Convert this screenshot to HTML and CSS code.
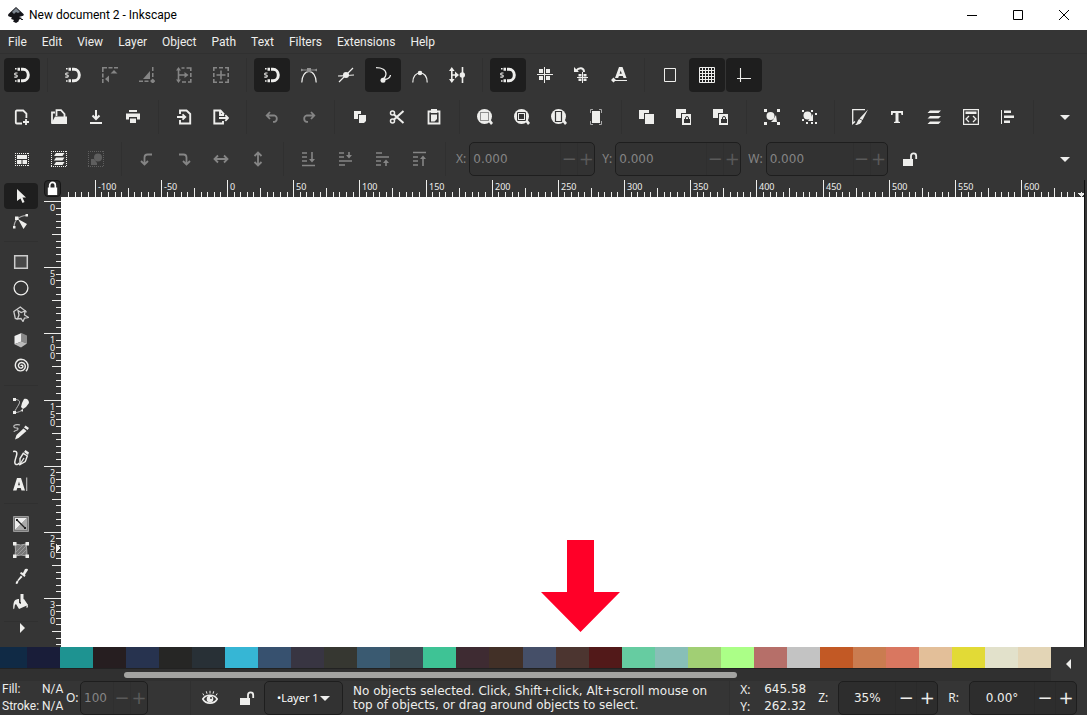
FILE: index.html
```html
<!DOCTYPE html>
<html lang="en">
<head>
<meta charset="utf-8">
<title>New document 2 - Inkscape</title>
<link rel="stylesheet" href="styles.css">
</head>
<body>
<svg class="sprite" aria-hidden="true">
  <symbol id="snap" viewBox="0 0 16 16"><path d="M7 2.200h2a5.300 5.800 0 0 1 0 11.600H7" fill="none" stroke="currentColor" stroke-width="3"/><path d="M3.500.700h2.500v3H3.500zM3.500 12.300h2.500v3H3.500zM1 .9h1.600v1.600H1zM1 13.200h1.600v1.600H1z"/><path d="M3.500 6H1.600c-1.200 0-1.200 2 0 2h.6c1.400 0 1.400 2.200 0 2.200H.3" fill="none" stroke="currentColor" stroke-width="1.200"/></symbol>
  <symbol id="bbox" viewBox="0 0 16 16"><path d="M0 0h5v1.600H1.600V5H0zM6.500 0h4v1.600h-4zM12 0h4v1.600h-4zM0 6.500h1.600v4H0zM0 12h1.600v4H0zM8.500 6.500L12 3l3.500 3.500zM3 12l4-3.500v7z"/></symbol>
  <symbol id="bboxedge" viewBox="0 0 16 16"><path d="M4 12l7-8v8zM0 13.500h4V15H0zM5.500 13.500h4V15h-4zM13 0h1.500v4H13zM13 6h1.500v4H13zM13.700 11.500l2.600 2.600-2.600 2.600-2.600-2.600z"/></symbol>
  <symbol id="bboxmid" viewBox="0 0 16 16"><path d="M5.500 1h3M10.500 1h4.300v3M14.800 6v4M14.800 12v3H12M10 15H6" fill="none" stroke="currentColor" stroke-width="1.600"/><path d="M2.500 2v12M3 8h7" fill="none" stroke="currentColor" stroke-width="1.600"/><path d="M2.500 0l2.500 3.500H0zM2.500 16l2.500-3.500H0zM8.500 5l4 3-4 3z"/></symbol>
  <symbol id="bboxcenter" viewBox="0 0 16 16"><path d="M.8 4V.8H4M6 .8h4M12 .8h3.200V4M15.200 6v4M15.200 12v3.200H12M10 15.200H6M4 15.200H.8V12M.8 10V6M8 3.500v9M3.500 8h9" fill="none" stroke="currentColor" stroke-width="1.600"/></symbol>
  <symbol id="nodes" viewBox="0 0 16 16"><path d="M.8 15.500C.8 9 4 4.500 8 4.500s7.200 4.500 7.200 11" fill="none" stroke="currentColor" stroke-width="1.200"/><path d="M1 3h14" stroke="#929292" fill="none"/><path d="M6 1h4v4H6zM0 1.500l2.500 1.500-2.500 1.500zM16 1.500L13.500 3l2.500 1.500z" fill="#929292"/></symbol>
  <symbol id="intersect" viewBox="0 0 16 16"><path d="M0 9c6 0 10-1 16-1M1 15L15 1" fill="none" stroke="currentColor" stroke-width="1.200"/><circle cx="8" cy="8" r="3"/></symbol>
  <symbol id="snappath" viewBox="0 0 16 16"><path d="M1 .7c6 0 10 2.300 10 6.300 0 3-2 4-3 5 4 1 7-1 7.500-4" fill="none" stroke="currentColor" stroke-width="1.300"/><circle cx="8" cy="13.300" r="2.500"/></symbol>
  <symbol id="smooth" viewBox="0 0 16 16"><path d="M.8 15.500C.8 9 4 6 8 6s7.200 3 7.200 9.500" fill="none" stroke="currentColor" stroke-width="1.200"/><circle cx="8" cy="6" r="2.300"/></symbol>
  <symbol id="midline" viewBox="0 0 16 16"><path d="M2.800 2v12M3 8h6M13.500 0v16" fill="none" stroke="currentColor" stroke-width="1.600"/><path d="M2.800 0l2.800 4H0zM2.800 16l2.800-4H0zM6 4.500L10 8l-4 3.500z"/><circle cx="13.300" cy="8" r="2.700"/></symbol>
  <symbol id="centers" viewBox="0 0 16 16"><path d="M2 2h4v4H2zM9 2h4v4H9zM2 9h4v4H2zM9 9h4v4H9z"/><path d="M7.500 0v16M0 7.500h16" stroke="currentColor"/></symbol>
  <symbol id="rotcenter" viewBox="0 0 16 16"><path d="M2 4c3-4 8-3.500 8 1" fill="none" stroke="currentColor" stroke-width="2"/><path d="M0 0l5 5H0zM4.500 7h3v2.500h-3zM9.500 7h3v2.500h-3zM4.500 11.500h3V14h-3zM9.500 11.500h3V14h-3z"/><path d="M8.500 5v11M3 10.500h11" stroke="currentColor" fill="none"/></symbol>
  <symbol id="baseline" viewBox="0 0 16 16"><path fill-rule="evenodd" d="M4 11L8 0h3.500l4 11h-3l-.7-2H7.900l-.7 2zM8.600 6.800h2.200L9.700 3.500zM2.500 10.500L5 13l-2.500 2.500L0 13z"/><path d="M3 13.500h13" stroke="currentColor"/></symbol>
  <symbol id="page" viewBox="0 0 16 16"><path d="M2.500 1.500h11v13h-11z" fill="none" stroke="currentColor"/></symbol>
  <symbol id="grid" viewBox="0 0 16 16"><path d="M.5.500h15v15H.5zM3.500 0v16M6.500 0v16M9.500 0v16M12.500 0v16M0 3.500h16M0 6.500h16M0 9.500h16M0 12.500h16" fill="none" stroke="currentColor"/></symbol>
  <symbol id="guide" viewBox="0 0 16 16"><path d="M4.500 1v14M1 11.500h14" fill="none" stroke="currentColor" stroke-width="1.100"/></symbol>
  <symbol id="new" viewBox="0 0 16 16"><path d="M8 14.500H2.800a1 1 0 0 1-1-1V2.500a1 1 0 0 1 1-1h6.400l3.200 3.200V9" fill="none" stroke="currentColor" stroke-width="1.800"/><path d="M12 10v6M9 13h6" fill="none" stroke="currentColor" stroke-width="1.800"/></symbol>
  <symbol id="open" viewBox="0 0 16 16"><path d="M5.500 7V1.200h4.500L13.500 5v3M1 14V3.500h3" fill="none" stroke="currentColor" stroke-width="1.800"/><path d="M4 7.500h12v7.500H0z"/></symbol>
  <symbol id="save" viewBox="0 0 16 16"><path d="M8 1v9M4.500 6.500L8 10l3.500-3.500M2 14h12" fill="none" stroke="currentColor" stroke-width="2"/></symbol>
  <symbol id="print" viewBox="0 0 16 16"><path d="M4 1h8v2H4zM1 4.500h14v6h-3V8H4v2.500H1zM5 9.500h6V14H5z"/></symbol>
  <symbol id="import" viewBox="0 0 16 16"><path d="M4 5V1.500h6.500L14.200 5v9.500H4V11" fill="none" stroke="currentColor" stroke-width="1.900"/><path d="M1 8h8M6.500 5.300L9.300 8 6.500 10.700" fill="none" stroke="currentColor" stroke-width="1.800"/></symbol>
  <symbol id="export" viewBox="0 0 16 16"><path d="M11 5.500L7.500 1.500H1.300v13H10V12M7 2v4h4" fill="none" stroke="currentColor" stroke-width="1.900"/><path d="M6 9h9M12.300 6.200L15 9l-2.700 2.800" fill="none" stroke="currentColor" stroke-width="1.800"/></symbol>
  <symbol id="undo" viewBox="0 0 16 16"><path d="M3 6.500h7.500a3.300 3.300 0 0 1 0 6.300H9M6 3L2.700 6.500 6 10" fill="none" stroke="currentColor" stroke-width="1.800"/></symbol>
  <symbol id="redo" viewBox="0 0 16 16"><path d="M13 6.500H5.500a3.300 3.300 0 0 0 0 6.300H7M10 3l3.300 3.500L10 10" fill="none" stroke="currentColor" stroke-width="1.800"/></symbol>
  <symbol id="copy" viewBox="0 0 16 16"><path d="M2 2h7v3H6v5H2z"/><path d="M7 6h7v6l-2 2H7z"/></symbol>
  <symbol id="cut" viewBox="0 0 16 16"><path d="M5 5.500L14.500 14M5 10.500L14.500 2" stroke="currentColor" stroke-width="2" fill="none"/><circle cx="3.500" cy="4" r="2" fill="none" stroke="currentColor" stroke-width="1.500"/><circle cx="3.500" cy="12" r="2" fill="none" stroke="currentColor" stroke-width="1.500"/></symbol>
  <symbol id="paste" viewBox="0 0 16 16"><path d="M2.500 2.500h11v12h-11z" fill="none" stroke="currentColor" stroke-width="1.800"/><path d="M5 0h6v4H5zM5 5.500h6V10l-2.500 2.500H5z"/></symbol>
  <symbol id="zoomsel" viewBox="0 0 16 16"><circle cx="7.500" cy="7.500" r="7.500"/><path d="M11 12l2-2 3 4-2 2z"/><path d="M3.500 3.500h8v8h-8z" fill="none" stroke="#333" stroke-dasharray="1 1"/></symbol>
  <symbol id="zoomdraw" viewBox="0 0 16 16"><circle cx="7.500" cy="7.500" r="7.500"/><path d="M11 12l2-2 3 4-2 2z"/><path d="M3.500 3.500h8v8h-8z" fill="none" stroke="#333"/><path d="M5 5h5v5H5z" fill="#333"/></symbol>
  <symbol id="zoompage" viewBox="0 0 16 16"><circle cx="7.500" cy="7.500" r="7.500"/><path d="M11 12l2-2 3 4-2 2z"/><path d="M4.500 2.500h6v10h-6z" fill="none" stroke="#333" stroke-width="1.200"/></symbol>
  <symbol id="zoomfit" viewBox="0 0 16 16"><path d="M4 2h8v12H4z"/><path d="M2.500 4V.5H5M11 .5h2.500V4M13.500 12v3.500H11M5 15.500H2.500V12" fill="none" stroke="#aaa"/></symbol>
  <symbol id="dup" viewBox="0 0 16 16"><path d="M0 1h10v3H5v6H0z"/><path d="M6 5h9v10H6z"/></symbol>
  <symbol id="clone" viewBox="0 0 16 16"><path d="M0 0h10v4H5v5H0z"/><path d="M6 5h9v11H6z"/><path d="M8 10h6v4H8z" fill="#333"/><path d="M9.500 10V9a1.500 1.500 0 0 1 3 0v1" fill="none" stroke="#333"/></symbol>
  <symbol id="group" viewBox="0 0 16 16"><path d="M0 0h3v3H0zM13 0h3v3h-3zM0 13h3v3H0zM13 13h3v3h-3zM9 11l3-5 1 7H7z"/><circle cx="6.500" cy="7" r="4"/></symbol>
  <symbol id="ungroup" viewBox="0 0 16 16"><path d="M1 1h2v2H1zM10 1h2v2h-2zM1 10h2v2H1zM14 4h2v2h-2zM5 13h2v2H5zM14 13h2v2h-2zM10 13h2v2h-2zM12 5v7H7z"/><circle cx="6.500" cy="6.500" r="4"/></symbol>
  <symbol id="fillstroke" viewBox="0 0 16 16"><path d="M13 .7H.7V14.500L3 12.500" fill="none" stroke="currentColor" stroke-width="1.300"/><path d="M16 .5L10.500 11l-3-1.500zM7 10l3 1.500c-.5 3-3.500 4.500-7 4.500 2-1 2-4 4-6z"/></symbol>
  <symbol id="text" viewBox="0 0 16 16"><path d="M2 2h12v4h-1.500L12 4H9.500v8.500L11 13v1H5v-1l1.500-.5V4H4l-.5 2H2z"/></symbol>
  <symbol id="layers" viewBox="0 0 16 16"><path d="M4 1.500h11L12.500 4h-11zM4 7h11l-2.500 2.500h-11zM4 12.500h11L12.500 15h-11z"/></symbol>
  <symbol id="xml" viewBox="0 0 16 16"><path d="M.6.600h14.800v14.800H.6z" fill="none" stroke="currentColor" stroke-width="1.200"/><path d="M2.500 2.500h11V5h-11z"/><path d="M6 7L3 10l3 3M10 7l3 3-3 3" fill="none" stroke="currentColor" stroke-width="1.300"/></symbol>
  <symbol id="align" viewBox="0 0 16 16"><path d="M1 1h1v14H1zM4 1.500h7V4H4zM4 6.500h10V9H4zM4 11.500h6V14H4z"/></symbol>
  <symbol id="selall" viewBox="0 0 16 16"><path d="M1 2.500h14M1 14.500h14M1.500 2v13M14.500 2v13" fill="none" stroke="currentColor" stroke-dasharray="1 1"/><path d="M3 4h10v4H3zM3 9h4.500v4H3zM8.500 9h4.500v4H8.500z"/></symbol>
  <symbol id="sellayers" viewBox="0 0 16 16"><path d="M0 .5h16M0 15.500h16M.5 0v16M15.500 0v16" fill="none" stroke="currentColor" stroke-dasharray="1 1"/><path d="M5 2h8.500l-2 3H3zM5 6.500h8.500l-2 3H3zM5 11h8.500l-2 3H3z"/></symbol>
  <symbol id="desel" viewBox="0 0 16 16"><path d="M0 .5h16M0 15.500h16M.5 0v16M15.500 0v16" fill="none" stroke="currentColor" stroke-dasharray="1 1"/><circle cx="10" cy="6.500" r="4"/><path d="M3 8h3l3 4v2H3z"/></symbol>
  <symbol id="rotl" viewBox="0 0 16 16"><path d="M13 3.500H8.500a3 3 0 0 0-3 3V13M2 10l3.500 3.500L9 10" fill="none" stroke="currentColor" stroke-width="1.800"/></symbol>
  <symbol id="rotr" viewBox="0 0 16 16"><path d="M3 3.500h4.500a3 3 0 0 1 3 3V13M7 10l3.500 3.500L14 10" fill="none" stroke="currentColor" stroke-width="1.800"/></symbol>
  <symbol id="fliph" viewBox="0 0 16 16"><path d="M2 8h12M5 4.500L1.500 8 5 11.500M11 4.500L14.500 8 11 11.500" fill="none" stroke="currentColor" stroke-width="1.800"/></symbol>
  <symbol id="flipv" viewBox="0 0 16 16"><path d="M8 2v12M4.500 5L8 1.500 11.500 5M4.500 11L8 14.500 11.500 11" fill="none" stroke="currentColor" stroke-width="1.800"/></symbol>
  <symbol id="tobottom" viewBox="0 0 16 16"><path d="M1 2h5M1 6h5M1 10h5M1 14.500h13" stroke="currentColor" stroke-width="1.600" fill="none"/><path d="M10.200 1h1.600v7H14l-3 3.500L8 8h2.200z"/></symbol>
  <symbol id="lower" viewBox="0 0 16 16"><path d="M1 2h5M1 6h5M1 10h13M1 14h6" stroke="currentColor" stroke-width="1.600" fill="none"/><path d="M10.200 1h1.600v3H14l-3 3.500L8 4h2.200z"/></symbol>
  <symbol id="raise" viewBox="0 0 16 16"><path d="M1 2h6M1 6h13M1 10h5M1 14h5" stroke="currentColor" stroke-width="1.600" fill="none"/><path d="M10.200 15h1.600v-3H14l-3-3.500L8 12h2.200z"/></symbol>
  <symbol id="totop" viewBox="0 0 16 16"><path d="M1 1.500h13M1 6h5M1 10h5M1 14h5" stroke="currentColor" stroke-width="1.600" fill="none"/><path d="M10.200 15h1.600V8H14l-3-3.500L8 8h2.200z"/></symbol>
  <symbol id="unlock" viewBox="0 0 16 16"><path d="M1 8h10v7H1z"/><path d="M9 8V5a2.600 2.600 0 0 1 5.200 0v3" fill="none" stroke="currentColor" stroke-width="1.800"/></symbol>
  <symbol id="lock" viewBox="0 0 16 16"><path d="M3 7h10v8H3z"/><path d="M5 8V4.500a3 3 0 0 1 6 0V8" fill="none" stroke="currentColor" stroke-width="1.800"/></symbol>
  <symbol id="down" viewBox="0 0 16 16"><path d="M3 6h10l-5 5z"/></symbol>
  <symbol id="right" viewBox="0 0 16 16"><path d="M6 3l5 5-5 5z"/></symbol>
  <symbol id="left" viewBox="0 0 16 16"><path d="M10 3L5 8l5 5z"/></symbol>
  <symbol id="t-select" viewBox="0 0 16 16"><path d="M4 1l9 8.500H9.500l2 4.500-2 1-2-4.500L4 13z"/></symbol>
  <symbol id="t-node" viewBox="0 0 16 16"><path d="M1 14C1 6 5 2 14 1.500" fill="none" stroke="#aaa" stroke-width="1.200"/><path d="M0 12h2.500v2.500H0zM12.500 0H15v2.500h-2.500zM2 2.500h3.500V6H2zM5 5l9 5-3.500 5z"/></symbol>
  <symbol id="t-rect" viewBox="0 0 16 16"><path d="M1.700 1.700h12.600v12.600H1.700z" fill="#484848" stroke="#ccc" stroke-width="1.500"/></symbol>
  <symbol id="t-circle" viewBox="0 0 16 16"><circle cx="8" cy="8" r="6.900" fill="none" stroke="currentColor" stroke-width="1.300"/></symbol>
  <symbol id="t-star" viewBox="0 0 16 16"><path d="M4.500 13L2.300 12.500.800 5.500 7.300 1l5.700 4.500-.2 1" fill="none" stroke="#ccc" stroke-width="1.300"/><path d="M5 4.500l3.200 2L12 5l-.5 4 4 2.500-4 .5-1.500 3.500-2-3-3.500.5 1.500-4z" fill="none" stroke="#ccc" stroke-width="1.300"/></symbol>
  <symbol id="t-cube" viewBox="0 0 16 16"><path d="M1.500 4L8.500 1v8.500l-7 2.800z" fill="#eee"/><path d="M8.500 1l5.500 2.500v8L8.500 9.500z" fill="#888"/><path d="M1.500 12.300l7-2.800 5.500 2-6 4z" fill="#bbb"/></symbol>
  <symbol id="t-spiral" viewBox="0 0 16 16"><path d="M8 8c0-1.200 1.700-1 1.900.2.300 1.800-2.500 2.600-3.800 1.100-1.700-2 .1-5 2.700-4.800 3.200.2 4.400 3.900 2.700 6.400-2.100 3-6.800 2.400-8.400-.8C1 6 3.700 1.300 8 1.200c4.500 0 7.500 4 6.900 8-.2 1.800-1 3-2 4" fill="none" stroke="currentColor" stroke-width="1.400"/></symbol>
  <symbol id="t-pen" viewBox="0 0 16 16"><path d="M1.500 1.500C6 1.500 7.500 3 6 6s-4 6-4.500 8.500c2 0 4 0 7-2" fill="none" stroke="#bbb"/><path d="M0 0h3v3H0zM0 13h3v3H0zM11 1c3-1 5 1 5 4l-3 4-3 2-2-2 1-4zM8 12l2-1v2l-1 1z"/></symbol>
  <symbol id="t-pencil" viewBox="0 0 16 16"><path d="M7 1C4 0 0 1 1 3s4 0 4 2-4 1-4 3" fill="none" stroke="#bbb" stroke-width="1.200"/><path d="M12.500 1.500L16 4l-1.500 2L11 3.500zM10.500 4.500L13.500 7l-8 7L2 15.500 3.500 11z"/></symbol>
  <symbol id="t-calli" viewBox="0 0 16 16"><path d="M0 1.500c3-1 4.500.5 3.500 4s-3 8.500-.5 9S5 14 6 13" fill="none" stroke="currentColor" stroke-width="1.500"/><path d="M12.500 0L16 2.500 15 5l-4-3z"/><path d="M10.300 3.300l4 2.700-2 5.500-5.300 3v-6z" fill="none" stroke="currentColor" stroke-width="1.400"/><path d="M6.500 15l4.500-7" stroke="currentColor" stroke-width="1.300"/></symbol>
  <symbol id="t-text" viewBox="0 0 16 16"><path fill-rule="evenodd" d="M0 14.500L4 2h4l4 12.500H8.500L7.700 12H4.300l-.8 2.500zM5 9.300h2L6 5.500z"/><path d="M13 1.500h1.300v13.500H13z" fill="#aaa"/></symbol>
  <symbol id="t-grad" viewBox="0 0 16 16"><path d="M.5.500h15v15H.5z" fill="#777" stroke="#999"/><path d="M2 2h12L2 14z" fill="#eee"/><path d="M14 2v12H2z" fill="#aaa"/><path d="M4 4l8 8" stroke="#222" stroke-width="1.200"/><path d="M3 3h2v2H3zM11 11h2v2h-2z" fill="#222"/></symbol>
  <symbol id="t-mesh" viewBox="0 0 16 16"><path d="M2 2q6 2 11 0 1 6 1 12-6-2-12 0 1-6 0-12z" fill="#777" stroke="#aaa"/><path d="M3 10l7-7M4 13l9-9M8 13l5-5" stroke="#999"/><path d="M0 0h3.500v3.500H0zM12.500 0H16v3.500h-3.500zM0 12.500h3.500V16H0zM12.500 12.500H16V16h-3.500z"/></symbol>
  <symbol id="t-drop" viewBox="0 0 16 16"><path d="M10 5l2-4q3-1 3 1l-3 4.500.5 1-1 1.500L7 5.500 8 4zM8 7.500L9.500 9 5 13.500 4.500 12zM4 12.500l1.500 1q-.5 2.500-2 2.500T3 14z"/></symbol>
  <symbol id="t-bucket" viewBox="0 0 16 16"><path d="M1 8c1-3 4-3 5-3v4l2 1V6l3-1 4 6-9 4-3-5c-2 1-1 4-2 5s-1-4 0-7z"/><path d="M7.500 0h3v8h-3z"/><path d="M13.500 9l1.500 3q0 2-1.500 2z"/></symbol>
  <symbol id="eye" viewBox="0 0 16 16"><path d="M.8 9C4 4 12 4 15.200 9 12 14.500 4 14.500 .8 9z" fill="none" stroke="currentColor" stroke-width="1.600"/><circle cx="8" cy="9" r="3.300"/><path d="M2 5.500L.8 3.500M5 3.700l-.7-2.400M8 3.500V.8M11 3.700l.7-2.400M14 5.500l1.200-2" stroke="currentColor"/><circle cx="9" cy="8" r="1" fill="#333"/></symbol>
</svg>

<header class="titlebar">
  <svg class="logo" viewBox="0 0 16 16"><path d="M8 0l7.500 7c1 1.300-.5 2-2 2.200L11 10l3 1-1 1-2 .5-.5 2L8 16l-3-1.500 1-1.500-3-1 1-1.500-3-1C-.5 8.500 0 7.500 1 6.500z" fill="#15151a"/><path d="M8 1l4 4-2 1-2-1-2 2-2-2z" fill="#7d8690"/><path d="M13 12h2v1h-2z" fill="#222"/></svg>
  <h1 class="title">New document 2 - Inkscape</h1>
  <button class="win" aria-label="Minimize"><svg viewBox="0 0 12 12"><path d="M1 6.500h10"/></svg></button>
  <button class="win" aria-label="Maximize"><svg viewBox="0 0 12 12"><path d="M1.500 1.500h9v9h-9z"/></svg></button>
  <button class="win" aria-label="Close"><svg viewBox="0 0 12 12"><path d="M1 1l10 10M11 1L1 11"/></svg></button>
</header>
<nav class="menubar">
  <button>File</button><button>Edit</button><button>View</button><button>Layer</button><button>Object</button><button>Path</button><button>Text</button><button>Filters</button><button>Extensions</button><button>Help</button>
</nav>
<div class="toolbar" data-icons="snap* | snap bbox- bboxedge- bboxmid- bboxcenter- | snap* nodes intersect snappath* smooth midline | snap* centers rotcenter baseline | page grid* guide*"></div>
<div class="toolbar"><div class="icons" data-icons="new open save print | import export | undo- redo- | copy cut paste | zoomsel zoomdraw zoompage zoomfit | dup clone clone | group ungroup | fillstroke text layers xml align |"></div><button class="tb more" aria-label="More commands"><svg><use href="#down"/></svg></button></div>
<div class="toolbar">
  <div class="icons" data-icons="selall sellayers desel-- | rotl- rotr- fliph- flipv- | tobottom- lower- raise- totop- |"></div>
  <div class="field off"><label for="x">X:</label><span class="spin wide"><input id="x" value="0.000"><button aria-label="Decrease X">−</button><button aria-label="Increase X">+</button></span></div>
  <div class="field off"><label for="y">Y:</label><span class="spin wide"><input id="y" value="0.000"><button aria-label="Decrease Y">−</button><button aria-label="Increase Y">+</button></span></div>
  <div class="field off"><label for="w">W:</label><span class="spin mid"><input id="w" value="0.000"><button aria-label="Decrease W">−</button><button aria-label="Increase W">+</button></span></div>
  <button class="tb ratio" aria-label="Lock ratio"><svg><use href="#unlock"/></svg></button>
  <button class="tb more" aria-label="More options"><svg><use href="#down"/></svg></button>
</div>

<main class="work">
  <div class="tools" data-icons="t-select* t-node | t-rect t-circle t-star t-cube t-spiral | t-pen t-pencil t-calli t-text | t-grad t-mesh t-drop t-bucket | right"></div>
  <div class="left">
    <button class="corner" aria-label="Lock guides"><svg><use href="#lock"/></svg></button>
    <svg class="ruler" id="vruler"></svg>
  </div>
  <div class="center">
    <svg class="ruler" id="hruler"></svg>
    <div class="canvas"><svg class="arrow" viewBox="0 0 80 92"><path d="M26 0h27v52h26L39.500 92 0 52h26z" fill="#ff0028"/></svg></div>
  </div>
  <div class="edge"></div>
</main>

<section class="palette">
  <div class="colors"><div class="swatches" id="swatches"></div><div class="track"><div class="thumb"></div></div></div>
  <button class="palmenu" aria-label="Palette menu"><svg><use href="#left"/></svg></button>
</section>

<footer class="status">
  <dl class="style"><dt>Fill:</dt><dd>N/A</dd><dt>Stroke:</dt><dd>N/A</dd></dl>
  <div class="field opacity"><label for="o">O:</label><span class="spin small"><input id="o" value="100"><button aria-label="Decrease opacity">−</button><button aria-label="Increase opacity">+</button></span></div>
  <span class="rule"></span>
  <button class="tb" aria-label="Layer visibility"><svg><use href="#eye"/></svg></button>
  <button class="tb last" aria-label="Layer lock"><svg><use href="#unlock"/></svg></button>
  <div class="combo"><select aria-label="Layer"><option>•Layer 1</option></select><svg><use href="#down"/></svg></div>
  <p class="msg">No objects selected. Click, Shift+click, Alt+scroll mouse on<br>top of objects, or drag around objects to select.</p>
  <dl class="coords"><dt>X:</dt><dd>645.58</dd><dt>Y:</dt><dd>262.32</dd></dl>
  <div class="field view"><label for="z">Z:</label><span class="spin zoom"><input id="z" value="35%"><button aria-label="Zoom out">−</button><button aria-label="Zoom in">+</button></span></div>
  <div class="field view"><label for="r">R:</label><span class="spin rot"><input id="r" value="0.00°"><button aria-label="Rotate left">−</button><button aria-label="Rotate right">+</button></span></div>
</footer>
<script src="app.js"></script>
</body>
</html>
```
FILE: styles.css
```css
* { box-sizing: border-box; }
body { margin: 0; height: 100vh; display: flex; flex-direction: column; overflow: hidden; background: #353535; color: #eeeeec; font: 12px/16px "Noto Sans", "Open Sans", sans-serif; }
button, input, select { font: inherit; color: inherit; background: none; border: 0; padding: 0; margin: 0; }
svg { display: block; fill: currentColor; }
.sprite { display: none; }

.titlebar { display: flex; align-items: center; height: 30px; flex: none; background: #fff; color: #000; padding-left: 8px; }
.logo { width: 16px; height: 16px; }
.title { flex: 1; margin: 0 0 0 5px; font: 12px/16px Roboto, sans-serif; }
.win { width: 46px; height: 30px; display: grid; place-items: center; }
.win svg { width: 12px; height: 12px; fill: none; stroke: #000; }

.menubar { display: flex; flex: none; height: 24px; border-bottom: 1px solid #303030; }
.menubar button { padding: 0 7px 0 8px; font-family: Roboto, sans-serif; }

.toolbar { display: flex; align-items: center; flex: none; height: 42px; padding: 4px; }
.icons { display: flex; align-items: center; }
.tb { width: 36px; height: 34px; margin-right: 1px; display: grid; place-items: center; border-radius: 4px; flex: none; }
.tb svg { width: 16px; height: 16px; }
.tb.on { background: #1e1e1e; }
.tb.dim { color: #858585; }
.tb.dimmer { color: #5e5e5e; }
.sep { display: block; width: 1px; height: 34px; margin: 0 7px 0 6px; background: #303030; }
.icons .sep:last-child { margin-right: 3px; }
.more { margin-left: auto; margin-right: 0; }
.ratio { margin-left: 4px; }

.field { display: flex; align-items: center; flex: none; }
.field label { padding: 0 3px 0 7px; }
.field.off { color: #858585; }
.spin { display: flex; height: 34px; border: 1px solid #1e1e1e; border-radius: 5px; background: #2d2d2d; overflow: hidden; }
.off .spin, .opacity .spin { background: #323232; color: #858585; }
.spin input { flex: 1; min-width: 0; padding-left: 3px; font: 12px/16px "DejaVu Sans", sans-serif; }
.spin button { width: 17px; border-left: 1px solid #2a2a2a; font: 18px/30px "DejaVu Sans", sans-serif; }
.off .spin button, .opacity .spin button { color: #5a5a5a; border-color: #2f2f2f; }
.wide { width: 126px; }
.mid { width: 122px; }
.small { width: 68px; }
.zoom { width: 100px; }
.rot { width: 108px; }
.view label { padding: 0 10px; }
.zoom button, .rot button { width: 21px; }
.zoom input, .rot input { padding: 0; text-align: center; }

.work { flex: 1; min-height: 0; display: flex; }
.tools { width: 44px; padding: 3px 6px 0 4px; overflow: hidden; }
.tools .tb { width: 34px; height: 26px; margin: 0; }
.tools .sep { width: 34px; height: 1px; margin: 6px 0 7px; }
.tools .sep:nth-last-child(2) { margin-bottom: 0; }
.tools .tb:last-child { height: 12px; padding-left: 2px; align-content: center; }
.left { width: 17px; display: flex; flex-direction: column; }
.corner { height: 17px; border: 1px solid #161616; border-radius: 4px; display: grid; place-items: center; background: #2a2a2a; overflow: hidden; }
.corner svg { width: 15px; height: 15px; color: #fff; }
.ruler { overflow: hidden; shape-rendering: crispEdges; font: 9px "Noto Sans", sans-serif; }
#vruler { width: 17px; flex: 1; min-height: 0; }
.center { flex: 1; min-width: 0; display: flex; flex-direction: column; }
#hruler { height: 17px; width: 100%; flex: none; }
.canvas { position: relative; flex: 1; background: #fff; }
.arrow { position: absolute; left: 480px; top: 343px; width: 80px; height: 92px; }
.edge { width: 3px; border-left: 1px solid #111; }

.palette { display: flex; flex: none; height: 34px; }
.colors { flex: 1; min-width: 0; }
.swatches { display: flex; height: 21px; }
.swatches i { flex: 33 1 0; }
.swatches i:first-child { flex-grow: 27; }
.track { height: 13px; padding-top: 3px; border-top: 1px solid #222; background: #303030; }
.thumb { width: 58.3%; height: 6px; margin-left: 11.8%; border-radius: 3px; background: #a3a3a1; }
.palmenu { width: 36px; display: grid; place-items: center; }
.palmenu svg { width: 16px; height: 16px; }

.status { display: flex; align-items: center; flex: none; height: 34px; padding: 0 10px 0 2px; }
.style { display: grid; grid-template-columns: 40px 24px; flex: none; line-height: 17px; margin: 0; font-family: Roboto, sans-serif; }
dd, .msg { margin: 0; }
.opacity label { width: 14px; padding: 0; }
.rule { width: 1px; height: 34px; margin: 0 1px 0 42px; background: #303030; }
.last { margin-right: 0; width: 35px; }
.combo { position: relative; width: 79px; flex: none; }
.combo select { width: 100%; height: 34px; appearance: none; padding-left: 12px; border: 1px solid #1e1e1e; border-radius: 5px; background: #323232; font: 11px/16px "Noto Sans", sans-serif; color: #fff; }
.combo svg { position: absolute; right: 10px; top: 9px; width: 16px; height: 16px; pointer-events: none; }
.msg { flex: 1; padding-left: 10px; font: 12px/14px "DejaVu Sans", sans-serif; white-space: nowrap; }
.coords { display: grid; grid-template-columns: 24px 44px; flex: none; line-height: 17px; margin: 0; padding-left: 10px; border-left: 1px solid #303030; }
.coords dd { font-family: "DejaVu Sans", sans-serif; }
```
FILE: app.js
```js
document.querySelectorAll('[data-icons]').forEach(function (bar) {
  bar.innerHTML = bar.dataset.icons.split(' ').map(function (item) {
    if (item === '|') return '<span class="sep"></span>';
    var name = item.replace(/(\*|-+)$/, '');
    var state = item.slice(name.length);
    var cls = { '*': ' on', '-': ' dim', '--': ' dimmer' }[state] || '';
    return '<button class="tb' + cls + '" aria-label="' + name + '"><svg><use href="#' + name + '"/></svg></button>';
  }).join('');
});

// Ten divisions for every 50 document units.
var STEP = 6.617;
function ruler(el, vertical, origin) {
  var length = vertical ? el.clientHeight : el.clientWidth;
  var out = '';
  for (var i = Math.ceil((1 - origin) / STEP); origin + i * STEP < length; i++) {
    if (vertical && i < 0) continue;
    var p = Math.round(origin + i * STEP);
    var size = i % 10 === 0 ? 17 : i % 5 === 0 ? 9 : 5;
    out += vertical
      ? '<rect x="' + (17 - size) + '" y="' + p + '" width="' + size + '" height="1"/>'
      : '<rect x="' + p + '" y="' + (17 - size) + '" width="1" height="' + size + '"/>';
    if (i % 10 !== 0) continue;
    var label = String(i * 5);
    if (!vertical) out += '<text x="' + (p + 3) + '" y="10">' + label + '</text>';
    else label.split('').forEach(function (digit, n) {
      out += '<text x="6" y="' + (p + 10 + n * 8) + '">' + digit + '</text>';
    });
  }
  out += vertical
    ? '<path d="M12 347l5 4-5 4z"/>'
    : '<path d="M' + (length - 7) + ' 13h8l-4 4z"/>';
  el.innerHTML = out;
}
ruler(document.getElementById('hruler'), false, 166);
ruler(document.getElementById('vruler'), true, 4);

document.getElementById('swatches').innerHTML = ('102a45 191d39 1e9391 261e20 27334f 262625 283036 36b6d5 37516f 383542 363731 3a5a71 3a4c54 3ec395 3e2b32 423027 454f68 4c3530 521919 66cca1 88bfb7 a1cf74 abff87 b66f69 c3c3c3 c25925 ca7c50 d97760 e3bf99 e2da36 e2e1cb e3d5b6')
  .split(' ').map(function (c) { return '<i style="background:#' + c + '"></i>'; }).join('');
```
